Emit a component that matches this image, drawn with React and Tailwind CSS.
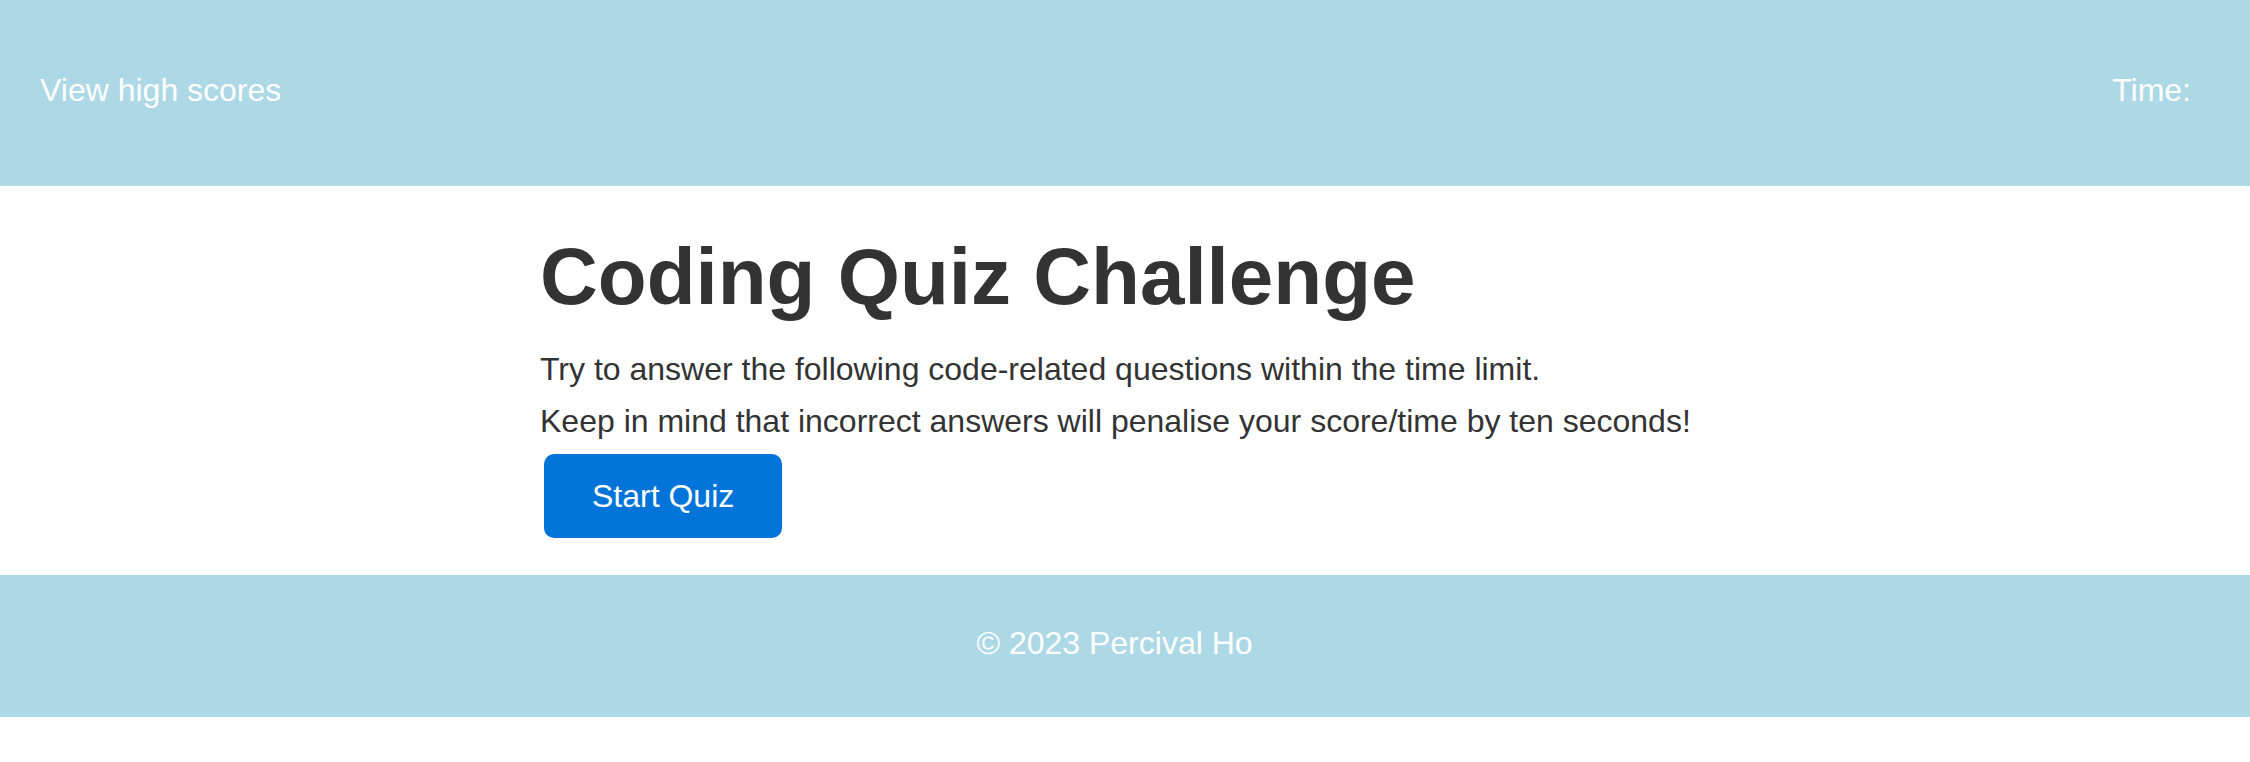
import React from "react";

function App() {
    return (
        <div className="font-['Liberation_Sans',Arial,sans-serif] text-[#333] bg-white min-h-screen">
            {/* top bar */}
            <header className="flex justify-between h-[186px] pt-[72px] pl-[40px] pr-[59px] bg-[#add8e6] text-white text-[32px] leading-[36.8px]">
                <a href="#" className="text-white">View high scores</a>
                <div>Time: <span></span></div>
            </header>

            <main className="w-[52%] mx-auto flex flex-col items-start pt-[45px] pb-[37px]">
                <h1 className="text-[80px] font-bold leading-[92px]">Coding Quiz Challenge</h1>
                <p className="mt-[28px] text-[32px] leading-[36.8px]">Try to answer the following code-related questions within the time limit.</p>
                <p className="mt-[15px] text-[32px] leading-[36.8px]">Keep in mind that incorrect answers will penalise your score/time by ten seconds!</p>
                <button className="mt-[14px] ml-[4px] px-[48px] py-[24px] text-[32px] leading-[36px] text-white bg-[#0074d9] rounded-[10px]">
                    Start Quiz
                </button>
            </main>

            <footer className="h-[142px] pt-[50px] pr-[21px] bg-[#add8e6] text-white text-center text-[32px] leading-[36.8px]">
                © 2023 Percival Ho
            </footer>
        </div>
    )
}

export default App;
